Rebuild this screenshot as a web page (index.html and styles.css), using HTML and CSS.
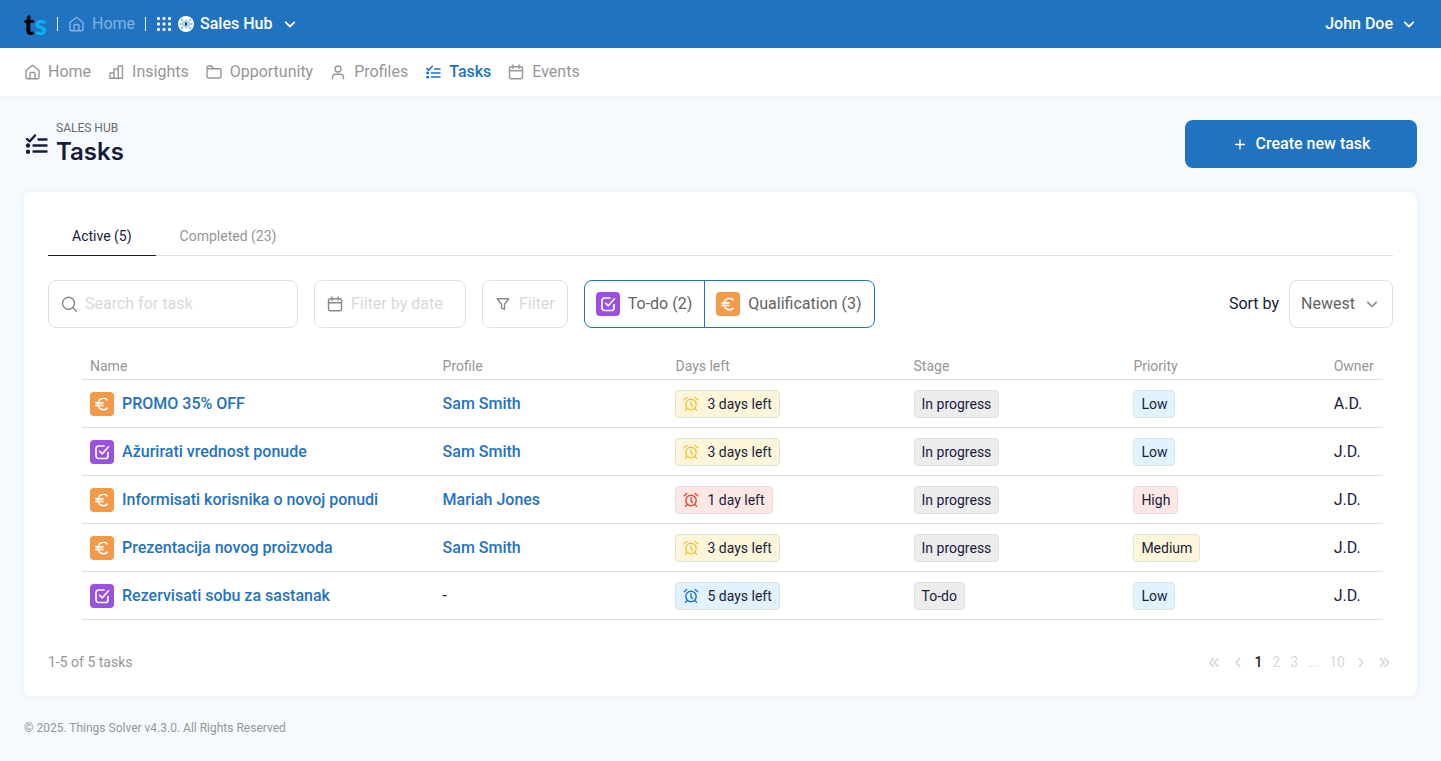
FILE: index.html
```
<!DOCTYPE html>
<html lang="en">

<head>
    <meta charset="UTF-8">
    <meta name="viewport" content="width=device-width, initial-scale=1.0">
    <title>Sales Hub - Tasks</title>
    <link rel="stylesheet" href="styles.css">
</head>

<body>
    <!-- icons -->
    <svg class="sprite" aria-hidden="true">
        <symbol id="i-home" viewBox="0 0 16 16">
            <path d="M2 6.500 8.500 1.200 15 6.500v6.800a1.500 1.500 0 0 1-1.500 1.500h-10A1.500 1.500 0 0 1 2 13.300z" />
            <path d="M6 14.500V9.500a1 1 0 0 1 1-1h3a1 1 0 0 1 1 1v5" />
        </symbol>
        <symbol id="i-bars" viewBox="0 0 16 16">
            <path d="M2 14.300V9h4v5.300zM6 14.300V5h4.300v9.300zM10.300 14.300V2h4.200v12.300z" />
        </symbol>
        <symbol id="i-folder" viewBox="0 0 16 16">
            <path d="M1 12.500v-9A1.500 1.500 0 0 1 2.500 2h3l2 2.700h6A1.500 1.500 0 0 1 15 6.200v6.300a1.500 1.500 0 0 1-1.500 1.500h-11A1.500 1.500 0 0 1 1 12.500zM1 4.700h6.500" />
        </symbol>
        <symbol id="i-user" viewBox="0 0 16 16">
            <circle cx="8" cy="5" r="3" />
            <path d="M2.500 14.700v-1.700a2.800 2.800 0 0 1 2.800-2.800h5.400a2.800 2.800 0 0 1 2.800 2.800v1.700" />
        </symbol>
        <symbol id="i-tasks" viewBox="0 0 24 24">
            <path d="M3 7 5.500 9.500 11 3.500M14.500 7.500h8M9.500 13.500h13M9.500 19.500h13" />
            <circle class="dot" cx="4" cy="13.500" r="2.200" />
            <circle class="dot" cx="4" cy="19.700" r="2.200" />
        </symbol>
        <symbol id="i-calendar" viewBox="0 0 16 16">
            <rect x="1.500" y="2.800" width="13" height="12" rx="1.500" />
            <path d="M1.500 6.800h13M5 1v3.300M11 1v3.300" />
        </symbol>
        <symbol id="i-search" viewBox="0 0 16 16">
            <circle cx="7.500" cy="7.300" r="6" />
            <path d="m12 11.700 3.500 3.500" />
        </symbol>
        <symbol id="i-filter" viewBox="0 0 16 16">
            <path d="M2.200 2.800h11.600L9.500 8.200v5.300l-3-1.800V8.200z" />
        </symbol>
        <symbol id="i-down" viewBox="0 0 16 16">
            <path d="m3.800 6.300 4.200 4.200 4.200-4.200" />
        </symbol>
        <symbol id="i-plus" viewBox="0 0 16 16">
            <path d="M8 4v9M3.500 8.500h9" />
        </symbol>
        <symbol id="i-alarm" viewBox="0 0 16 16">
            <circle cx="8" cy="8.500" r="5.200" />
            <path d="M8 5.800v3l1.300 1.700M1.200 3.800l2.600-2.300M14.800 3.800l-2.600-2.300M4 12.600l-1.500 1.700M12 12.600l1.500 1.700" />
        </symbol>
        <symbol id="i-check" viewBox="0 0 24 24">
            <path d="M18 12.500V16a2.500 2.500 0 0 1-2.500 2.500h-7A2.500 2.500 0 0 1 6 16V8.500A2.500 2.500 0 0 1 8.500 6H14" />
            <path d="m9.800 11.300 2.500 2.500 6.200-7" />
        </symbol>
        <symbol id="i-euro" viewBox="0 0 24 24">
            <path d="M17 7.800a5.600 5.600 0 1 0 0 8.600M6 10.800h7M6 13.500h7" />
        </symbol>
        <symbol id="i-grid" viewBox="0 0 16 16">
            <g class="dot">
                <rect x="1" y="1" width="3" height="3" rx="1" />
                <rect x="6.500" y="1" width="3" height="3" rx="1" />
                <rect x="12" y="1" width="3" height="3" rx="1" />
                <rect x="1" y="6.500" width="3" height="3" rx="1" />
                <rect x="6.500" y="6.500" width="3" height="3" rx="1" />
                <rect x="12" y="6.500" width="3" height="3" rx="1" />
                <rect x="1" y="12" width="3" height="3" rx="1" />
                <rect x="6.500" y="12" width="3" height="3" rx="1" />
                <rect x="12" y="12" width="3" height="3" rx="1" />
            </g>
        </symbol>
        <symbol id="i-prev" viewBox="0 0 16 16">
            <path d="M9.500 4.700 6.200 8.500l3.300 3.800" />
        </symbol>
        <symbol id="i-next" viewBox="0 0 16 16">
            <path d="m6.500 4.700 3.300 3.800-3.300 3.800" />
        </symbol>
        <symbol id="i-first" viewBox="0 0 16 16">
            <path d="M7.500 4.700 3.800 8.500l3.700 3.800M12 4.700 8.300 8.500l3.700 3.800" />
        </symbol>
        <symbol id="i-last" viewBox="0 0 16 16">
            <path d="m3.500 4.700 3.700 3.800-3.700 3.800M8 4.700l3.700 3.800L8 12.300" />
        </symbol>
    </svg>

    <header class="topbar">
        <a class="logo" href="#"><span>t</span>s</a>
        <span class="sep"></span>
        <a class="top-link dim" href="#"><svg class="icon"><use href="#i-home" /></svg>Home</a>
        <span class="sep"></span>
        <button class="hub" type="button">
            <svg class="icon"><use href="#i-grid" /></svg>
            <svg class="globe" viewBox="0 0 18 18">
                <circle cx="9" cy="9" r="9" fill="#fff" />
                <g fill="none" stroke="#5fb0e2" stroke-width=".8">
                    <path d="M9 9 4.500 4.500M9 9l4.500-4.500M9 9l-4.500 4.500M9 9l4.500 4.500M9 9H2.500M9 9h6.500M9 9V3.500M9 9v5.500" />
                    <ellipse cx="9" cy="9" rx="4" ry="3.500" />
                </g>
                <g fill="#2f8fd0">
                    <circle cx="4.300" cy="4.500" r=".9" />
                    <circle cx="13.700" cy="4.500" r=".9" />
                    <circle cx="4.300" cy="13.500" r=".9" />
                    <circle cx="13.700" cy="13.500" r=".9" />
                    <circle cx="2.300" cy="9" r=".8" />
                    <circle cx="15.700" cy="9" r=".8" />
                </g>
                <ellipse cx="9" cy="9" rx="1.200" ry="2" fill="#12334f" />
            </svg>
            Sales Hub
            <svg class="icon arrow"><use href="#i-down" /></svg>
        </button>
        <button class="user" type="button">John Doe<svg class="icon arrow"><use href="#i-down" /></svg></button>
    </header>

    <nav class="menu">
        <a href="#"><svg class="icon"><use href="#i-home" /></svg>Home</a>
        <a href="#"><svg class="icon"><use href="#i-bars" /></svg>Insights</a>
        <a href="#"><svg class="icon"><use href="#i-folder" /></svg>Opportunity</a>
        <a href="#"><svg class="icon"><use href="#i-user" /></svg>Profiles</a>
        <a class="active" href="#"><svg class="icon"><use href="#i-tasks" /></svg>Tasks</a>
        <a href="#"><svg class="icon"><use href="#i-calendar" /></svg>Events</a>
    </nav>

    <main>
        <div class="page-head">
            <svg class="page-icon"><use href="#i-tasks" /></svg>
            <div class="page-title">
                <p>SALES HUB</p>
                <h1>Tasks</h1>
            </div>
            <button class="create" type="button"><svg class="icon"><use href="#i-plus" /></svg>Create new task</button>
        </div>

        <section class="card">
            <div class="tabs">
                <a class="active" href="#">Active (5)</a>
                <a href="#">Completed (23)</a>
            </div>

            <div class="filters">
                <label class="field search">
                    <svg class="icon"><use href="#i-search" /></svg>
                    <input type="text" placeholder="Search for task" aria-label="Search for task">
                </label>
                <label class="field date">
                    <svg class="icon"><use href="#i-calendar" /></svg>
                    <input type="text" placeholder="Filter by date" aria-label="Filter by date">
                </label>
                <button class="field filter" type="button"><svg class="icon"><use href="#i-filter" /></svg>Filter</button>
                <div class="types">
                    <button type="button"><svg class="type todo"><use href="#i-check" /></svg>To-do (2)</button>
                    <button type="button"><svg class="type euro"><use href="#i-euro" /></svg>Qualification (3)</button>
                </div>
                <div class="sort">
                    <label for="sort">Sort by</label>
                    <div class="select">
                        <select id="sort">
                            <option>Newest</option>
                            <option>Oldest</option>
                        </select>
                        <svg class="icon arrow"><use href="#i-down" /></svg>
                    </div>
                </div>
            </div>

            <div class="table-box">
                <table>
                    <thead>
                        <tr>
                            <th class="col-name">Name</th>
                            <th class="col-profile">Profile</th>
                            <th class="col-days">Days left</th>
                            <th class="col-stage">Stage</th>
                            <th class="col-priority">Priority</th>
                            <th>Owner</th>
                        </tr>
                    </thead>
                    <tbody>
                        <tr>
                            <td><a class="task" href="#"><svg class="type euro"><use href="#i-euro" /></svg>PROMO 35% OFF</a></td>
                            <td><a href="#">Sam Smith</a></td>
                            <td><span class="tag yellow"><svg class="icon"><use href="#i-alarm" /></svg>3 days left</span></td>
                            <td><span class="tag gray">In progress</span></td>
                            <td><span class="tag blue">Low</span></td>
                            <td>A.D.</td>
                        </tr>
                        <tr>
                            <td><a class="task" href="#"><svg class="type todo"><use href="#i-check" /></svg>Ažurirati vrednost ponude</a></td>
                            <td><a href="#">Sam Smith</a></td>
                            <td><span class="tag yellow"><svg class="icon"><use href="#i-alarm" /></svg>3 days left</span></td>
                            <td><span class="tag gray">In progress</span></td>
                            <td><span class="tag blue">Low</span></td>
                            <td>J.D.</td>
                        </tr>
                        <tr>
                            <td><a class="task" href="#"><svg class="type euro"><use href="#i-euro" /></svg>Informisati korisnika o novoj ponudi</a></td>
                            <td><a href="#">Mariah Jones</a></td>
                            <td><span class="tag red"><svg class="icon"><use href="#i-alarm" /></svg>1 day left</span></td>
                            <td><span class="tag gray">In progress</span></td>
                            <td><span class="tag red">High</span></td>
                            <td>J.D.</td>
                        </tr>
                        <tr>
                            <td><a class="task" href="#"><svg class="type euro"><use href="#i-euro" /></svg>Prezentacija novog proizvoda</a></td>
                            <td><a href="#">Sam Smith</a></td>
                            <td><span class="tag yellow"><svg class="icon"><use href="#i-alarm" /></svg>3 days left</span></td>
                            <td><span class="tag gray">In progress</span></td>
                            <td><span class="tag yellow">Medium</span></td>
                            <td>J.D.</td>
                        </tr>
                        <tr>
                            <td><a class="task" href="#"><svg class="type todo"><use href="#i-check" /></svg>Rezervisati sobu za sastanak</a></td>
                            <td>-</td>
                            <td><span class="tag blue"><svg class="icon"><use href="#i-alarm" /></svg>5 days left</span></td>
                            <td><span class="tag gray">To-do</span></td>
                            <td><span class="tag blue">Low</span></td>
                            <td>J.D.</td>
                        </tr>
                    </tbody>
                </table>
            </div>

            <div class="card-foot">
                <span>1-5 of 5 tasks</span>
                <div class="pager">
                    <button type="button" aria-label="First"><svg class="icon"><use href="#i-first" /></svg></button>
                    <button type="button" aria-label="Previous"><svg class="icon"><use href="#i-prev" /></svg></button>
                    <div class="pages">
                        <a class="current" href="#">1</a>
                        <a href="#">2</a>
                        <a href="#">3</a>
                        <span>...</span>
                        <a href="#">10</a>
                    </div>
                    <button type="button" aria-label="Next"><svg class="icon"><use href="#i-next" /></svg></button>
                    <button type="button" aria-label="Last"><svg class="icon"><use href="#i-last" /></svg></button>
                </div>
            </div>
        </section>
    </main>

    <footer>© 2025. Things Solver v4.3.0. All Rights Reserved</footer>
</body>

</html>
```
FILE: styles.css
```
* {
    padding: 0;
    margin: 0;
    box-sizing: border-box;
}

body {
    background-color: #f5fafe;
    font: 16px/24px Roboto, sans-serif;
    color: #171b3d;
}

a {
    text-decoration: none;
    color: inherit;
}

button, input, select {
    font: inherit;
    color: inherit;
    background: none;
    border: none;
    outline: none;
}

button {
    cursor: pointer;
}

/* icons */
.sprite {
    display: none;
}

.icon {
    width: 16px;
    height: 16px;
    flex: none;
    fill: none;
    stroke: currentColor;
    stroke-width: 1.4;
    stroke-linecap: round;
    stroke-linejoin: round;
}

.dot {
    fill: currentColor;
    stroke: none;
}

.arrow {
    stroke-width: 1.8;
}

.type {
    width: 24px;
    height: 24px;
    flex: none;
    border-radius: 4px;
    fill: none;
    stroke: #fff;
    stroke-width: 1.7;
    stroke-linecap: round;
    stroke-linejoin: round;
}

.todo {
    background-color: #9851e0;
}

.euro {
    background-color: #f2994a;
}

/* top bar */
.topbar {
    display: flex;
    align-items: center;
    gap: 10px;
    height: 48px;
    padding: 0 24px;
    background-color: #1f73c1;
    color: #fff;
}

.logo {
    font: 900 28px/32px Lato, sans-serif;
    color: #0cb0ea;
}

.logo span {
    color: #000;
}

.sep {
    width: 1px;
    height: 14px;
    background-color: #fff;
}

.top-link, .user {
    display: flex;
    align-items: center;
    gap: 8px;
}

.hub {
    display: flex;
    align-items: center;
    gap: 6px;
}

.hub .arrow {
    margin-left: 4px;
}

.dim {
    color: #83b2de;
}

.hub, .user {
    font-weight: 500;
}

.user {
    margin-left: auto;
}

.globe {
    width: 16px;
    height: 16px;
}

/* menu */
.menu {
    display: flex;
    gap: 17px;
    padding: 12px 24px;
    background-color: #fff;
    color: #969696;
    box-shadow: 0 2px 4px rgba(0, 0, 0, .04);
}

.menu a {
    display: flex;
    align-items: center;
    gap: 8px;
}

.menu .active {
    color: #1f73c1;
    font-weight: 500;
}

.menu .active .icon {
    stroke-width: 2.4;
}

/* page head */
main {
    padding: 24px 24px 0;
}

.page-head {
    display: flex;
    align-items: center;
    gap: 8px;
    margin-bottom: 24px;
}

.page-icon {
    width: 24px;
    height: 24px;
    fill: none;
    stroke: currentColor;
    stroke-width: 2.4;
    stroke-linecap: round;
    stroke-linejoin: round;
}

.page-title p {
    font-size: 12px;
    line-height: 16px;
    color: #6b6b6b;
}

.page-title h1 {
    font: 600 24px/32px Inter, sans-serif;
}

.create {
    display: flex;
    align-items: center;
    justify-content: center;
    gap: 8px;
    width: 232px;
    height: 48px;
    margin-left: auto;
    border-radius: 8px;
    background-color: #1f73c1;
    color: #fff;
    font-weight: 500;
}

/* card */
.card {
    padding: 24px;
    border-radius: 8px;
    background-color: #fff;
    box-shadow: 0 0 8px rgba(0, 0, 0, .05);
}

.tabs {
    display: flex;
    border-bottom: 1px solid #e0e0e0;
    font-size: 14px;
    line-height: 40px;
    color: #969696;
}

.tabs a {
    height: 40px;
    margin-bottom: -1px;
    padding: 0 24px;
}

.tabs .active {
    border-bottom: 1px solid #171b3d;
    color: #171b3d;
}

.filters {
    display: flex;
    gap: 16px;
    margin: 24px 0;
}

.field {
    display: flex;
    align-items: center;
    gap: 8px;
    height: 48px;
    padding: 0 12px;
    border: 1px solid #e0e0e0;
    border-radius: 8px;
    color: #d9d9d9;
}

.field .icon {
    color: #8a8a8a;
}

.field input {
    width: 100%;
    color: #171b3d;
}

.field input::placeholder {
    color: #d9d9d9;
}

.search {
    width: 250px;
}

.date {
    width: 152px;
}

.types {
    display: flex;
    border: 1px solid #1f73c1;
    border-radius: 8px;
    color: #636363;
}

.types button {
    display: flex;
    align-items: center;
    gap: 8px;
    padding: 0 12px 0 11px;
}

.types button + button {
    border-left: 1px solid #1f73c1;
}

.sort {
    display: flex;
    align-items: center;
    gap: 10px;
    margin-left: auto;
}

.select {
    position: relative;
}

.select select {
    appearance: none;
    width: 104px;
    height: 48px;
    padding: 0 11px;
    border: 1px solid #e0e0e0;
    border-radius: 8px;
    color: #636363;
}

.select .icon {
    position: absolute;
    top: 16px;
    right: 13px;
    color: #969696;
    pointer-events: none;
}

/* table */
.table-box {
    padding: 0 10px 0 34px;
}

table {
    width: 100%;
    table-layout: fixed;
    border-collapse: separate;
    border-spacing: 0;
}

th {
    height: 28px;
    padding: 0 8px;
    border-bottom: 1px solid #e0e0e0;
    font-size: 14px;
    font-weight: 400;
    text-align: left;
    color: #969696;
}

td {
    height: 48px;
    padding: 0 8px;
    border-bottom: 1px solid #e0e0e0;
    white-space: nowrap;
}

td a {
    color: #1f73c1;
    font-weight: 500;
}

.col-name {
    width: 27.1%;
}

.col-profile {
    width: 17.9%;
}

.col-days {
    width: 18.3%;
}

.col-stage {
    width: 16.9%;
}

.col-priority {
    width: 15.4%;
}

.task {
    display: flex;
    align-items: center;
    gap: 8px;
}

.tag {
    display: inline-flex;
    align-items: center;
    gap: 8px;
    height: 28px;
    padding: 0 7px;
    border: 1px solid #e0e0e0;
    border-radius: 4px;
    font-size: 14px;
    vertical-align: middle;
}

.yellow {
    background-color: #fff6d9;
}

.yellow .icon {
    color: #ecc440;
}

.red {
    background-color: #ffe8e4;
}

.red .icon {
    color: #dc4b33;
}

.blue {
    background-color: #e1f3ff;
}

.blue .icon {
    color: #1f73c1;
}

.gray {
    background-color: #ececec;
}

/* card foot */
.card-foot {
    display: flex;
    align-items: center;
    justify-content: space-between;
    margin-top: 32px;
    font-size: 14px;
    line-height: 20px;
    color: #969696;
}

.pager {
    display: flex;
    align-items: center;
    gap: 8px;
    color: #d9d9d9;
}

.pages {
    display: flex;
    gap: 10px;
}

.pager button {
    display: flex;
}

.pager .icon {
    stroke-width: 1.8;
}

.pages .current {
    color: #222;
    font-weight: 500;
}

footer {
    padding: 24px;
    font-size: 12px;
    line-height: 16px;
    color: #969696;
}
```
